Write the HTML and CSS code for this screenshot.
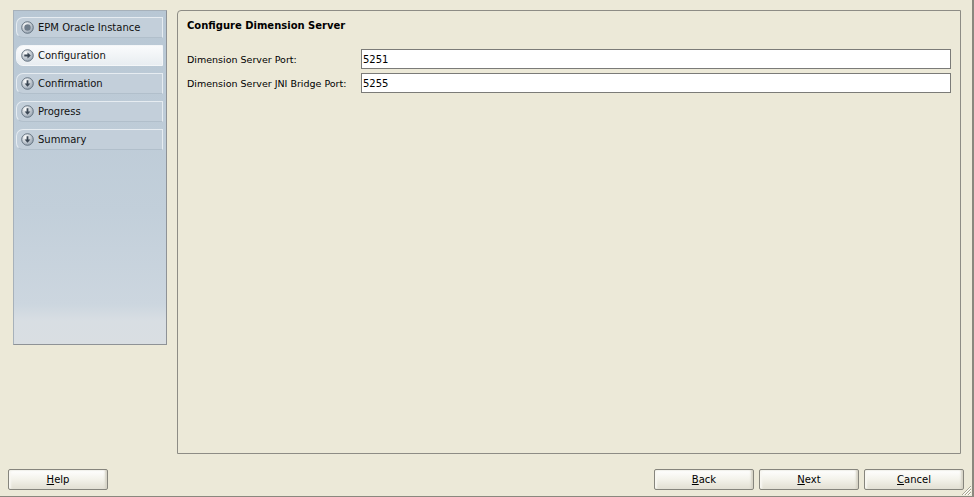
FILE: index.html
```html
<!DOCTYPE html>
<html lang="en">
<head>
    <meta charset="UTF-8">
    <title>EPM System Configurator</title>
    <link rel="stylesheet" href="styles.css">
</head>
<body>
    <div class="window">
        <div class="content">
            <!-- Step list -->
            <div class="steps">
                <div class="step">
                    <svg class="step-icon" viewBox="0 0 13 13"><defs><radialGradient id="g1" cx="0.35" cy="0.3" r="0.8"><stop offset="0" stop-color="#ffffff"/><stop offset="1" stop-color="#8e9cab"/></radialGradient></defs><circle cx="6.5" cy="6.5" r="5.8" fill="url(#g1)" stroke="#5f6d7b" stroke-width="0.9"/><circle cx="6.5" cy="6.5" r="3.2" fill="#6f7d8b"/></svg>
                    <span>EPM Oracle Instance</span>
                </div>
                <div class="step active">
                    <svg class="step-icon" viewBox="0 0 13 13"><circle cx="6.5" cy="6.5" r="5.8" fill="url(#g1)" stroke="#5f6d7b" stroke-width="0.9"/><path d="M3.3 5.6h3.2V3.6l3.3 2.9-3.3 2.9V7.4H3.3z" fill="#3a4653"/></svg>
                    <span>Configuration</span>
                </div>
                <div class="step">
                    <svg class="step-icon" viewBox="0 0 13 13"><circle cx="6.5" cy="6.5" r="5.8" fill="url(#g1)" stroke="#5f6d7b" stroke-width="0.9"/><path d="M5.6 3.3v3.2H3.6l2.9 3.3 2.9-3.3H7.4V3.3z" fill="#3a4653"/></svg>
                    <span>Confirmation</span>
                </div>
                <div class="step">
                    <svg class="step-icon" viewBox="0 0 13 13"><circle cx="6.5" cy="6.5" r="5.8" fill="url(#g1)" stroke="#5f6d7b" stroke-width="0.9"/><path d="M5.6 3.3v3.2H3.6l2.9 3.3 2.9-3.3H7.4V3.3z" fill="#3a4653"/></svg>
                    <span>Progress</span>
                </div>
                <div class="step">
                    <svg class="step-icon" viewBox="0 0 13 13"><circle cx="6.5" cy="6.5" r="5.8" fill="url(#g1)" stroke="#5f6d7b" stroke-width="0.9"/><path d="M5.6 3.3v3.2H3.6l2.9 3.3 2.9-3.3H7.4V3.3z" fill="#3a4653"/></svg>
                    <span>Summary</span>
                </div>
            </div>

            <!-- Main panel -->
            <div class="panel">
                <h1 class="panel-title">Configure Dimension Server</h1>
                <div class="form-row">
                    <label class="form-label" for="port">Dimension Server Port:</label>
                    <input class="form-input" id="port" type="text" value="5251">
                </div>
                <div class="form-row">
                    <label class="form-label" for="jni">Dimension Server JNI Bridge Port:</label>
                    <input class="form-input" id="jni" type="text" value="5255">
                </div>
            </div>
        </div>

        <div class="footer">
            <button class="btn"><u>H</u>elp</button>
            <div class="footer-right">
                <button class="btn"><u>B</u>ack</button>
                <button class="btn"><u>N</u>ext</button>
                <button class="btn"><u>C</u>ancel</button>
            </div>
        </div>

        <svg class="grip" viewBox="0 0 12 12"><path d="M11 2L2 11M11 5L5 11M11 8L8 11" stroke="#a8a594" stroke-width="1"/><path d="M11 3L3 11M11 6L6 11M11 9L9 11" stroke="#ffffff" stroke-width="1"/></svg>
    </div>
</body>
</html>
```

FILE: styles.css
```css
body {
    margin: 0;
    padding: 0;
    background: #ece9d8;
    font-family: "DejaVu Sans", "Liberation Sans", sans-serif;
    font-size: 10px;
    color: #000;
}

.window {
    position: relative;
    width: 972px;
    height: 496px;
    background: #ece9d8;
    border-right: 2px solid #8a887e;
    border-bottom: 1px solid #8a887e;
    display: flex;
    flex-direction: column;
}

.content {
    display: flex;
    gap: 10px;
    padding: 10px 11px 0 13px;
}

/* Step list on the left */
.steps {
    width: 152px;
    height: 327px;
    border: 1px solid #8e9296;
    border-top-color: #a7b1ba;
    border-left-color: #a7b1ba;
    background: linear-gradient(to bottom, #b8c7d4 0%, #c2cfda 60%, #ccd6df 88%, #d8dee3 93%, #d9dee2 100%);
    padding: 6px 3px 0 2px;
    display: flex;
    flex-direction: column;
    gap: 7px;
}

.step {
    height: 19px;
    display: flex;
    align-items: center;
    gap: 4px;
    padding-left: 4px;
    border: 1px solid #e6ecf1;
    border-bottom-color: #b1bfcb;
    border-radius: 7px 0 0 7px;
    background: #c3cfda;
    font-size: 10px;
    color: #111;
}

.step.active {
    background: linear-gradient(to bottom, #fafbfc, #e8edf1);
    border-color: #f4f6f8;
}

.step-icon {
    width: 13px;
    height: 13px;
    flex-shrink: 0;
}

/* Main panel */
.panel {
    flex-grow: 1;
    height: 444px;
    border: 1px solid #8d8c85;
    border-radius: 4px 0 0 0;
    padding: 0 9px;
    box-sizing: border-box;
}

.panel-title {
    margin: 9px 0 18px 0;
    font-size: 10px;
    font-weight: bold;
}

.form-row {
    display: flex;
    align-items: center;
    margin-bottom: 4px;
}

.form-label {
    width: 174px;
    font-size: 9.5px;
}

.form-input {
    width: 590px;
    height: 20px;
    box-sizing: border-box;
    border: 1px solid #7b7b78;
    background: #fff;
    padding: 0 1px;
    font-family: "DejaVu Sans", sans-serif;
    font-size: 10px;
    outline: none;
}

/* Footer buttons */
.footer {
    display: flex;
    justify-content: space-between;
    padding: 15px 8px 0 8px;
}

.footer-right {
    display: flex;
    gap: 5px;
}

.btn {
    width: 100px;
    height: 21px;
    border: 1px solid #86857d;
    border-radius: 2px;
    background: linear-gradient(to bottom, #ffffff 0%, #f3f2ea 50%, #e2dfd2 100%);
    box-shadow: inset -2px 0 2px #d6d3c6, inset 2px 0 2px #f8f7f2;
    font-family: "DejaVu Sans", sans-serif;
    font-size: 10px;
    color: #000;
    padding: 0;
}

.grip {
    position: absolute;
    right: 0;
    bottom: 0;
    width: 12px;
    height: 12px;
}
```
